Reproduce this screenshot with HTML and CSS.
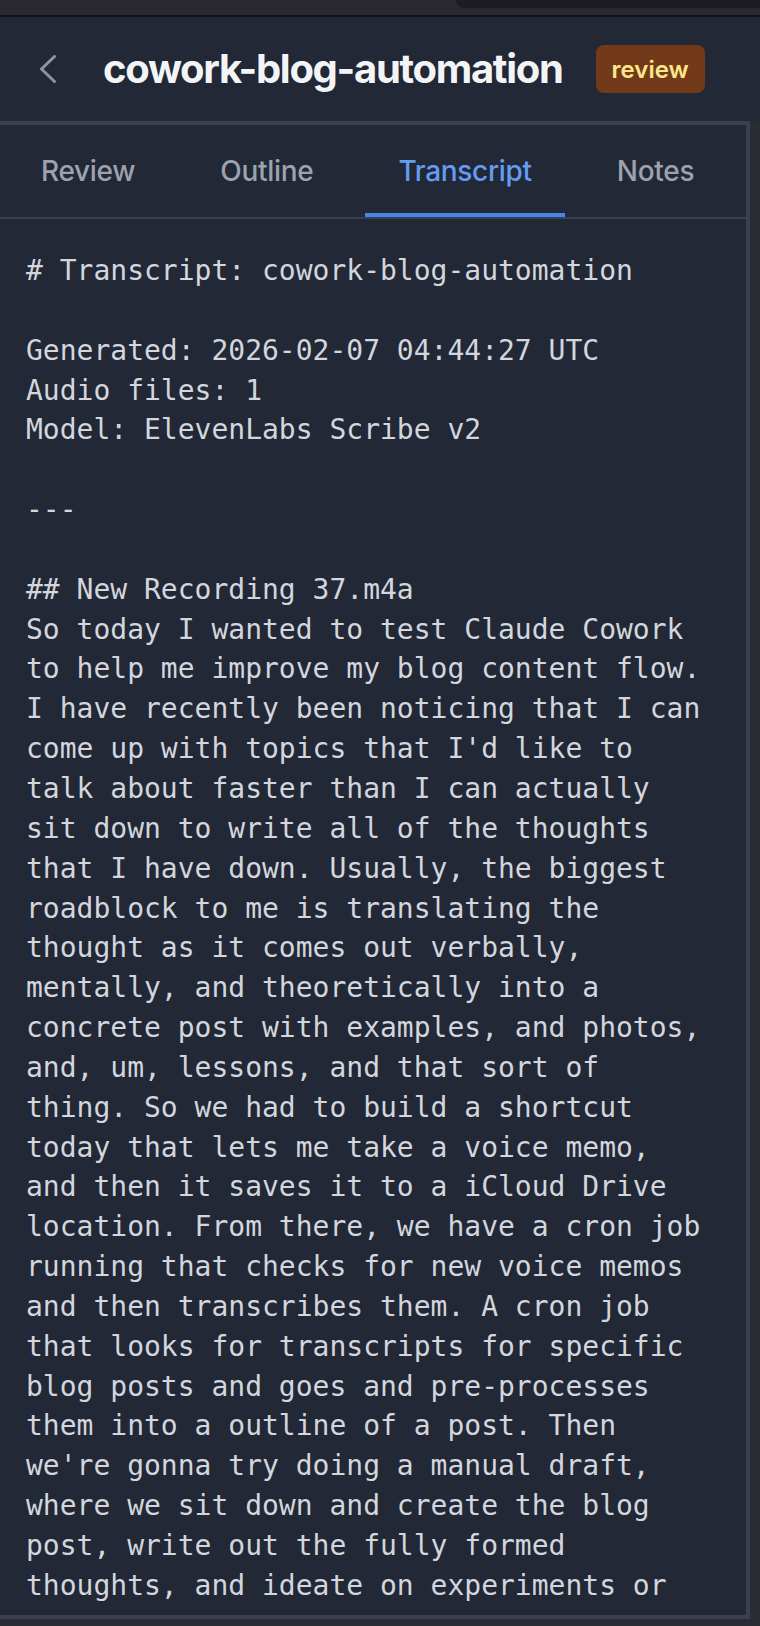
FILE: index.html
```html
<!DOCTYPE html>
<html lang="en">
<head>
<meta charset="utf-8">
<title>cowork-blog-automation</title>
<link rel="stylesheet" href="styles.css">
</head>
<body>
  <div class="titlebar"><div class="titlebar-tab"></div></div>
  <header class="header">
    <button class="back" aria-label="Back">
      <svg width="16" height="28" viewBox="0 0 16 28" aria-hidden="true">
        <polyline points="14.5,1.5 1.5,14 14.5,26.5" fill="none" stroke="currentColor" stroke-width="3" stroke-linecap="round" stroke-linejoin="round"/>
      </svg>
    </button>
    <h1 class="title">cowork-blog-automation</h1>
    <span class="badge">review</span>
  </header>
  <div class="frame">
    <main class="panel">
      <nav class="tabs">
        <a class="tab">Review</a>
        <a class="tab">Outline</a>
        <a class="tab active">Transcript</a>
        <a class="tab">Notes</a>
      </nav>
      <div class="content">
<pre class="transcript"># Transcript: cowork-blog-automation

Generated: 2026-02-07 04:44:27 UTC
Audio files: 1
Model: ElevenLabs Scribe v2

---

## New Recording 37.m4a
So today I wanted to test Claude Cowork to help me improve my blog content flow. I have recently been noticing that I can come up with topics that I'd like to talk about faster than I can actually sit down to write all of the thoughts that I have down. Usually, the biggest roadblock to me is translating the thought as it comes out verbally, mentally, and theoretically into a concrete post with examples, and photos, and, um, lessons, and that sort of thing. So we had to build a shortcut today that lets me take a voice memo, and then it saves it to a iCloud Drive location. From there, we have a cron job running that checks for new voice memos and then transcribes them. A cron job that looks for transcripts for specific blog posts and goes and pre-processes them into a outline of a post. Then we're gonna try doing a manual draft, where we sit down and create the blog post, write out the fully formed thoughts, and ideate on experiments or</pre>
      </div>
    </main>
  </div>
</body>
</html>
```

FILE: styles.css
```css
* { box-sizing: border-box; }

html, body {
  margin: 0;
  padding: 0;
}

body {
  width: 760px;
  height: 1626px;
  overflow: hidden;
  background: #2a2c33;
  font-family: "Inter", "Liberation Sans", sans-serif;
  display: flex;
  flex-direction: column;
}

.titlebar {
  height: 17px;
  background: #2a2831;
  border-bottom: 2px solid #121214;
  display: flex;
  justify-content: flex-end;
  flex-shrink: 0;
}

.titlebar-tab {
  width: 304px;
  height: 8px;
  background: #1d1c21;
  border-bottom-left-radius: 10px;
}

.header {
  height: 104px;
  background: #222836;
  display: flex;
  align-items: center;
  padding-left: 40px;
  flex-shrink: 0;
}

.back {
  width: 16px;
  height: 28px;
  padding: 0;
  border: 0;
  background: none;
  color: #8e949e;
  display: flex;
}

.title {
  margin: 0 0 0 47px;
  font-size: 40px;
  font-weight: 700;
  letter-spacing: -1.3px;
  color: #f3f4f6;
  line-height: 1;
}

.badge {
  margin-left: 33px;
  height: 48px;
  padding: 0 16px;
  display: flex;
  align-items: center;
  background: #733a19;
  color: #fde68a;
  border-radius: 8px;
  font-size: 24px;
  font-weight: 600;
}

.frame {
  display: flex;
  flex-shrink: 0;
}

.panel {
  width: 750px;
  height: 1498px;
  background: #222836;
  border-top: 4px solid #394050;
  border-right: 4px solid #394050;
  border-bottom: 4px solid #394050;
  display: flex;
  flex-direction: column;
}

.tabs {
  display: flex;
  gap: 19px;
  padding-left: 8px;
  border-bottom: 2px solid #394050;
  flex-shrink: 0;
}

.tab {
  height: 92px;
  padding: 4px 33px 0;
  display: flex;
  align-items: center;
  justify-content: center;
  font-size: 28px;
  font-weight: 500;
  letter-spacing: -0.3px;
  color: #9ca3af;
  border-bottom: 4px solid transparent;
}

.tab.active {
  color: #639cf2;
  border-bottom-color: #4a84e8;
}

.content {
  flex: 1;
  overflow: hidden;
  padding: 32px 0 0 26px;
}

.transcript {
  margin: 0;
  width: 682px;
  font-family: "DejaVu Sans Mono", "Liberation Mono", monospace;
  font-size: 28px;
  line-height: 39.84px;
  color: #d3d6dc;
  white-space: pre-wrap;
}
```
